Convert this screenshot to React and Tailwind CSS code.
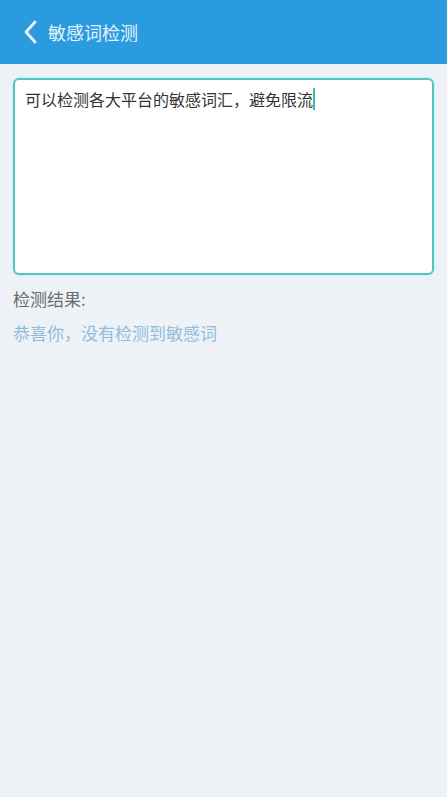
import { useState } from "react";

const cjk = { fontFamily: '"Noto Sans CJK SC", "Noto Sans", sans-serif' };

export default function App() {
  const [text] = useState("可以检测各大平台的敏感词汇，避免限流");

  return (
    <div className="min-h-[797px] w-full bg-[#eef2f6]" style={cjk}>
      <div className="flex h-16 items-center bg-[#2b9be0] pl-[23px]">
        <svg width="16" height="24" viewBox="0 0 16 24" fill="none" stroke="#e8f3fb" strokeWidth="2.8" strokeLinecap="round" strokeLinejoin="round">
          <path d="M12 2 L3 12 L12 22" />
        </svg>
        <div className="ml-[9px] text-[18px] text-[#e6f2fb]">敏感词检测</div>
      </div>

      <div className="px-[13px] pt-[14px]">
        <div className="h-[197px] rounded-[6px] border-2 border-[#52c7bd] bg-white px-[10px] pt-[7px] shadow-[0_0_2px_#9de6df]">
          <div className="flex items-center text-[16px] leading-[24px] text-[#333]">
            <span>{text}</span>
            <span className="inline-block h-[22px] w-[2px] bg-[#3fb6ac]" />
          </div>
        </div>

        <div className="mt-[12px] text-[17px] leading-[24px] text-[#6b6b6b]">检测结果:</div>
        <div className="mt-[10px] text-[17px] leading-[24px] text-[#8fbde0]">恭喜你，没有检测到敏感词</div>
      </div>
    </div>
  );
}
